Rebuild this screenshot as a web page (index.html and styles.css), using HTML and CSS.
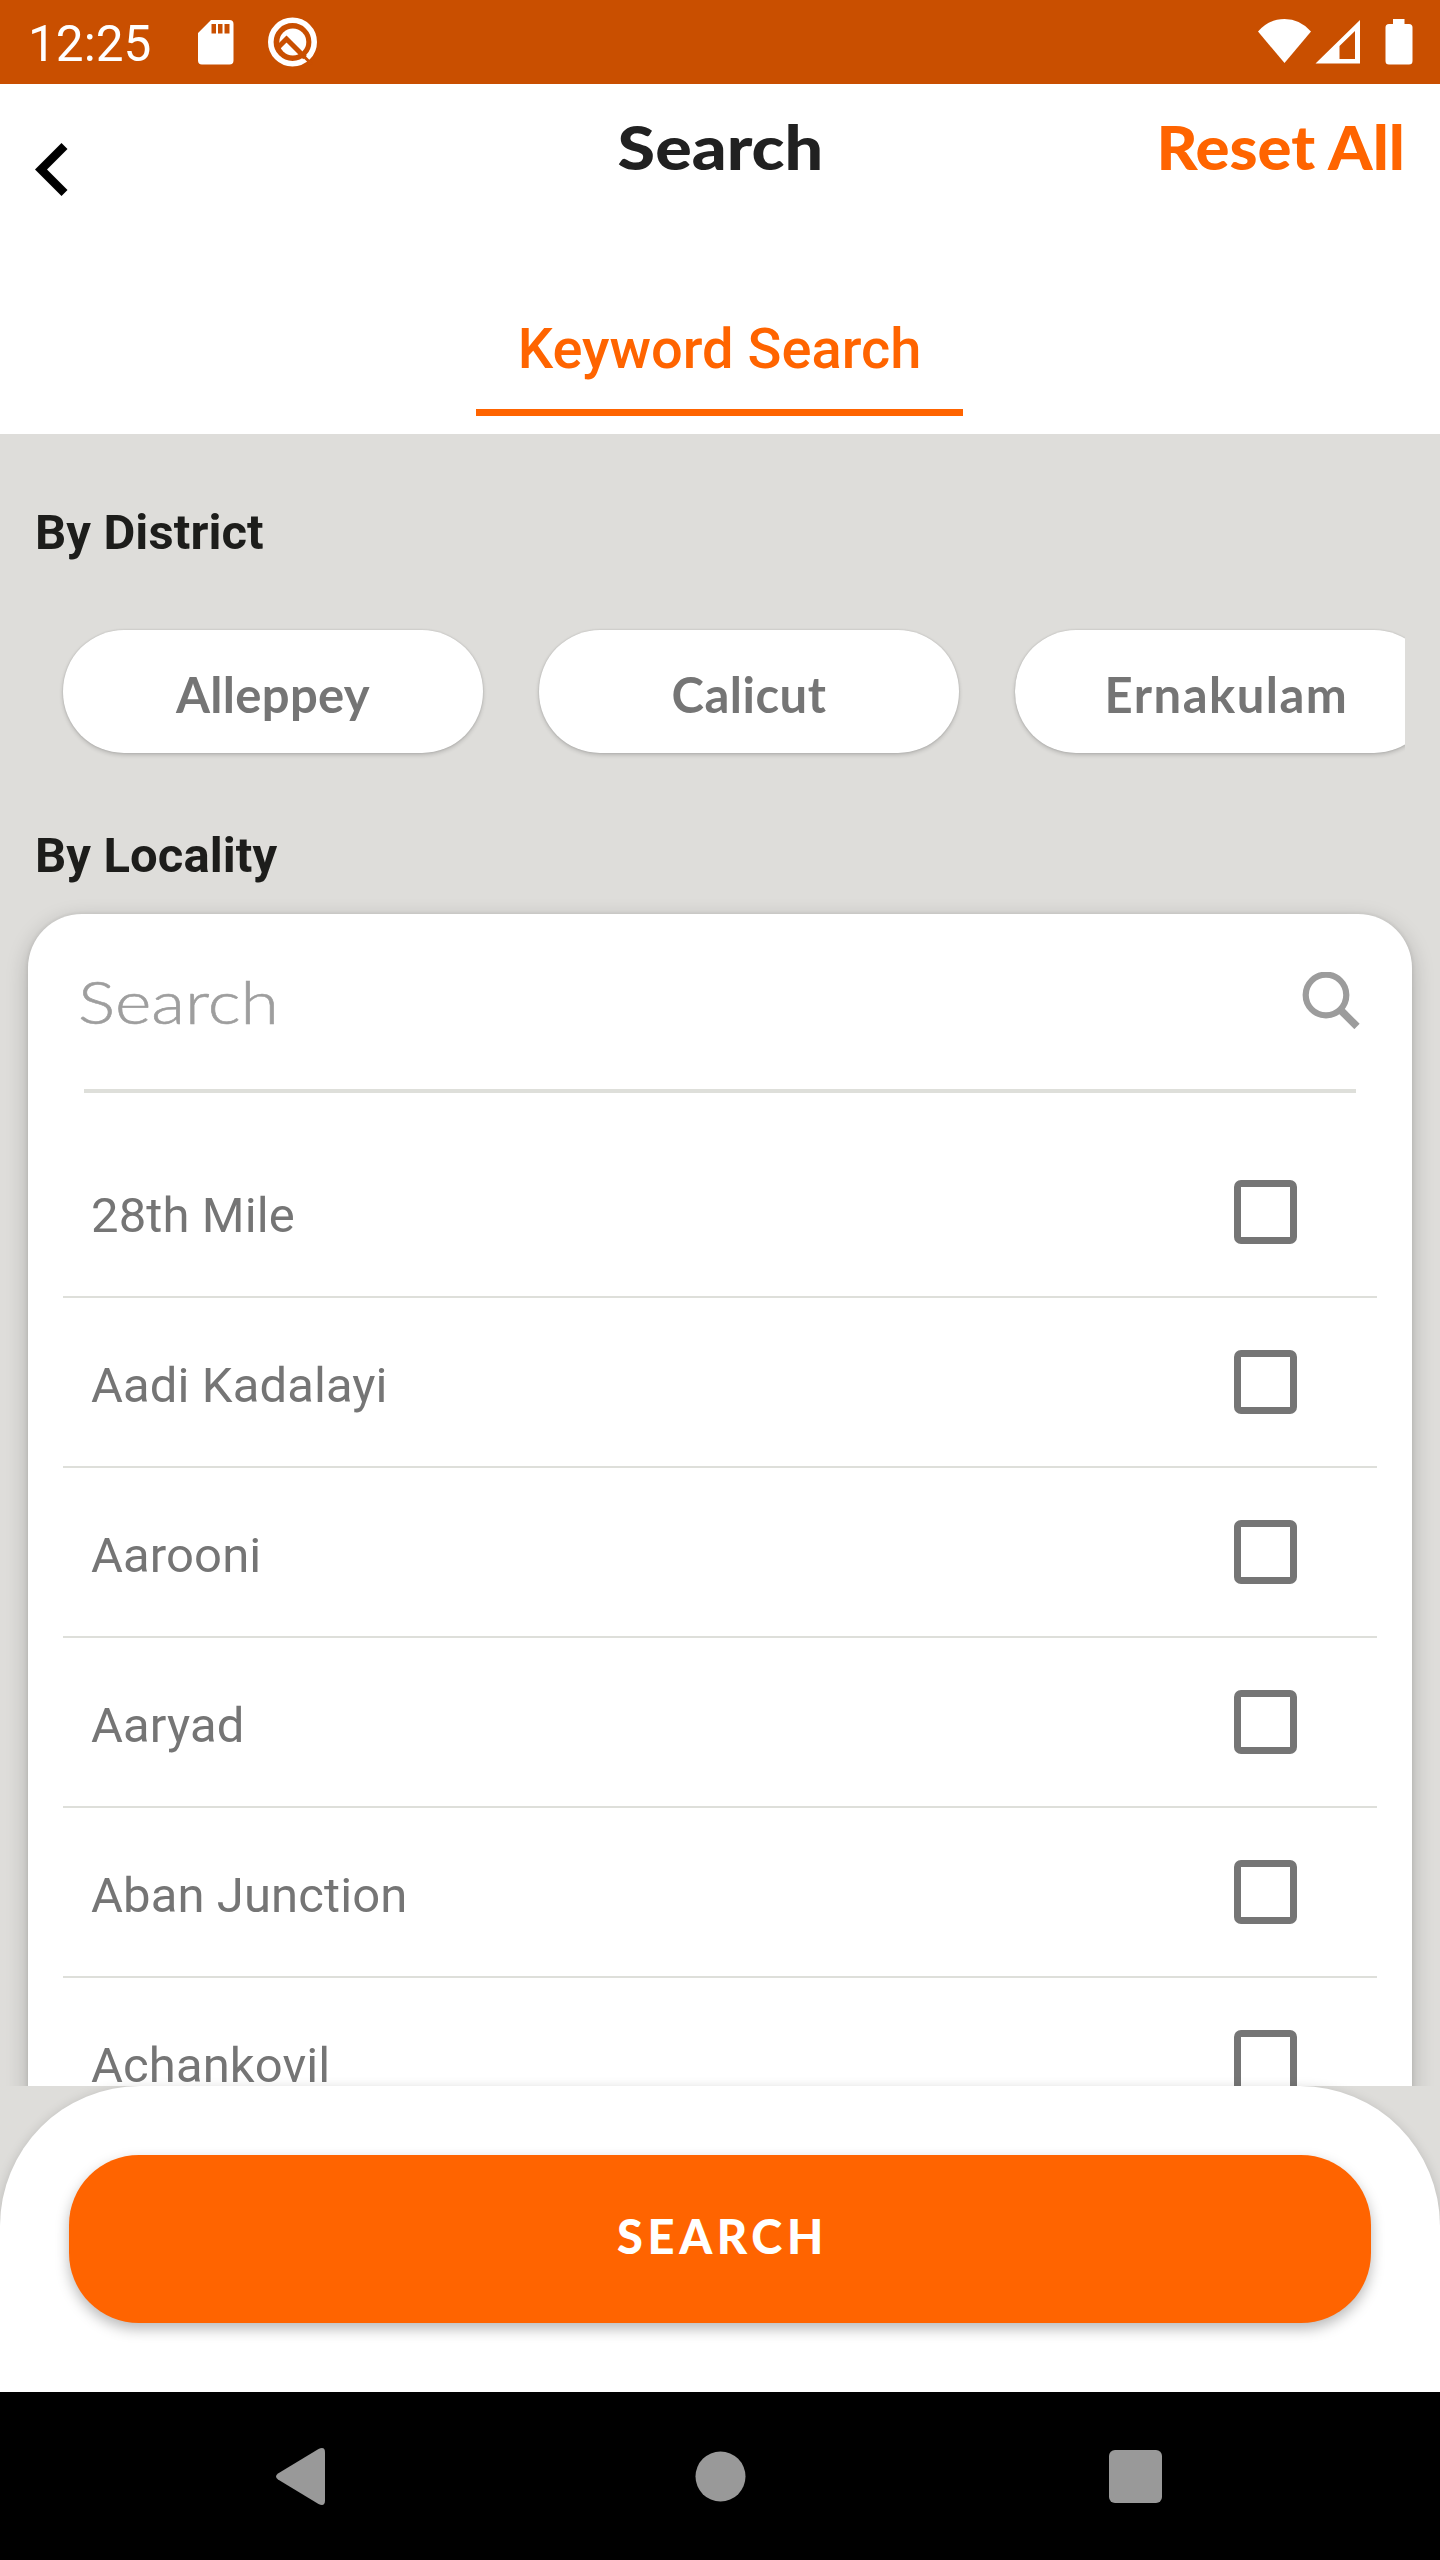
FILE: index.html
```html
<!DOCTYPE html>
<html lang="en">
<head>
<meta charset="utf-8">
<title>Search</title>
<link rel="stylesheet" href="styles.css">
</head>
<body>
<div class="screen">
  <div class="status">
    <span class="clock">12:25</span>
    <svg class="sd" width="36" height="45" viewBox="0 0 36 45"><path fill="#fff" fill-rule="evenodd" d="M13 0H31.500Q35.500 0 35.500 4V40.500Q35.500 44.500 31.500 44.500H4Q0 44.500 0 40.500V13ZM13.500 4V13.500H18V4ZM20 4V13.500H24.500V4ZM26.500 4V13.500H31.500V4Z"/></svg>
    <svg class="q" width="50" height="50" viewBox="0 0 50 50"><circle cx="24.500" cy="25" r="21.700" fill="none" stroke="#fff" stroke-width="5.600"/><circle cx="24.800" cy="25" r="13.500" fill="#fff"/><path d="M9 31.500 18.500 22 37 40.500" fill="none" stroke="#c94f00" stroke-width="5"/><path d="M34 37.500 44 47.500" stroke="#c94f00" stroke-width="3"/></svg>
    <svg class="sys" width="160" height="48" viewBox="0 0 160 48"><g fill="#fff"><path d="M0 13.500Q11 1 26.500 1T53 13.500L26.500 45Z"/><path fill-rule="evenodd" d="M102 2V45.500H57.500ZM97 13 81.500 28V41H97Z"/><path d="M135 1H146.500V6H151Q154.500 6 154.500 9.500V43Q154.500 46.500 151 46.500H131Q127.500 46.500 127.500 43V9.500Q127.500 6 131 6H135Z"/></g></svg>
  </div>
  <header class="header">
    <div class="bar">
      <svg class="back" width="33" height="53" viewBox="0 0 33 53"><path d="M26.500 0 32.500 6 12 26.500 32.500 47 26.500 53 0 26.500Z"/></svg>
      <h1 class="title">Search</h1>
      <span class="reset">Reset All</span>
    </div>
    <div class="tab">Keyword Search</div>
  </header>
  <main class="main">
    <h2 class="section">By District</h2>
    <div class="chips">
      <span class="chip">Alleppey</span>
      <span class="chip calicut">Calicut</span>
      <span class="chip ernakulam">Ernakulam</span>
    </div>
    <h2 class="section">By Locality</h2>
    <div class="card">
      <div class="field">
        <span class="placeholder">Search</span>
        <svg width="58" height="57" viewBox="0 0 58 57" fill="none" stroke="#9c9c9c"><circle cx="24" cy="23" r="20.300" stroke-width="6.200"/><path d="M38.500 38 55 54.500" stroke-width="7.500"/></svg>
      </div>
      <div class="rule"></div>
      <ul class="list">
        <li><span>28th Mile</span><i class="box"></i></li>
        <li><span>Aadi Kadalayi</span><i class="box"></i></li>
        <li><span>Aarooni</span><i class="box"></i></li>
        <li><span>Aaryad</span><i class="box"></i></li>
        <li><span>Aban Junction</span><i class="box"></i></li>
        <li><span>Achankovil</span><i class="box"></i></li>
      </ul>
    </div>
  </main>
  <footer class="footer">
    <div class="panel"><div class="button">SEARCH</div></div>
  </footer>
  <nav class="nav">
    <svg width="49" height="57" viewBox="0 0 49 57"><path fill="#999" d="M2 25.500 42.500 1Q49-2 49 4.500V52.500Q49 59 42.500 56L2 31.500Q-2 28.500 2 25.500Z"/></svg>
    <svg class="home" width="51" height="51" viewBox="0 0 51 51"><circle cx="25.500" cy="25.500" r="25" fill="#999"/></svg>
    <svg width="53" height="53" viewBox="0 0 53 53"><rect width="53" height="53" rx="6" fill="#999"/></svg>
  </nav>
</div>
</body>
</html>
```
FILE: styles.css
```css
* { box-sizing: border-box; }
body { margin: 0; background: #fff; font-family: Roboto, sans-serif; }
h1, h2, ul { margin: 0; padding: 0; }
svg { display: block; flex: none; }

.screen { width: 1440px; height: 2560px; display: flex; flex-direction: column; overflow: hidden; }

.status { height: 84px; flex: none; display: flex; align-items: center; background: #c94f00; color: #fff; padding: 0 22px 0 28px; }
.clock { width: 169.5px; padding-top: 4px; font-size: 49.5px; line-height: 80px; }
.q { margin-left: 34px; }
.sys { margin-left: auto; }

.header { height: 350px; flex: none; background: #fff; }
.bar { height: 196px; display: grid; grid-template-columns: 1fr auto 1fr; align-items: start; padding: 27px 35px 0; }
.back { margin-top: 32px; }
.title, .reset { font: 900 60px/72px Lato, sans-serif; }
.title { color: #212121; transform: scaleX(1.137); }
.reset { color: #ff6400; justify-self: end; transform: scaleX(1.058); transform-origin: right; }
.tab { width: 487px; height: 136px; margin-left: 476px; padding-top: 36px; border-bottom: 7px solid #ff6400; color: #ff6400; font-size: 56px; font-weight: 500; line-height: 66px; text-align: center; }

.main { height: 1652px; flex: none; background: #deddda; padding: 70px 28px 0; overflow: hidden; }
.section { padding-left: 7px; color: #1d1d1b; font-size: 49px; font-weight: 700; line-height: 58px; letter-spacing: .1px; }
.chips { display: flex; gap: 56px; overflow: hidden; margin: 38px 7px 44px 0; padding: 30px 0 30px 35px; }
.chip { width: 420px; height: 123px; flex: none; padding-top: 3px; border-radius: 61px; background: #fff; box-shadow: 0 2px 4px rgba(0, 0, 0, .18), 0 0 2px rgba(0, 0, 0, .15); color: #757575; font: 700 49px/123px Lato, sans-serif; letter-spacing: .3px; text-align: center; }
.calicut { letter-spacing: .5px; }
.ernakulam { letter-spacing: 1.5px; padding-left: 3px; }
.card { height: 1300px; margin-top: 29px; border-radius: 54px; background: #fff; box-shadow: 0 7px 22px rgba(0, 0, 0, .22), 0 0 4px rgba(0, 0, 0, .1); }
.field { height: 175px; display: flex; align-items: center; justify-content: space-between; padding: 0 52px 0 50px; }
.field svg { margin-bottom: 3px; }
.placeholder { color: #9e9e9e; font: 300 60px/175px Lato, sans-serif; -webkit-text-stroke: .6px #9e9e9e; transform: scaleX(1.162); transform-origin: left; }
.rule { height: 4px; margin: 0 56px 35px; background: #dedfda; }
.list { margin: 0 35px; list-style: none; }
.list li { height: 170px; display: flex; align-items: center; justify-content: space-between; padding: 0 80px 0 28px; border-bottom: 2px solid #dedfda; color: #757575; font-size: 49px; line-height: 58px; letter-spacing: .1px; }
.list span { padding-top: 7px; }
.box { width: 63.5px; height: 63.5px; border: 7px solid #757575; border-radius: 7px; }

.footer { height: 306px; flex: none; position: relative; background: #deddda; }
.panel { height: 306px; padding: 69px; border-radius: 140px 140px 0 0; background: #fff; box-shadow: 0 2px 12px rgba(0, 0, 0, .17); }
.button { height: 168px; border-radius: 70px; background: #ff6400; box-shadow: 0 6px 14px rgba(0, 0, 0, .28); color: #fff; font: 900 47px/162px Lato, sans-serif; letter-spacing: 4.6px; text-indent: 5px; text-align: center; }

.nav { height: 168px; flex: none; position: relative; display: flex; align-items: center; justify-content: space-between; padding: 0 278px 0 276px; background: #000; }
.home { margin-left: 6px; }
```
